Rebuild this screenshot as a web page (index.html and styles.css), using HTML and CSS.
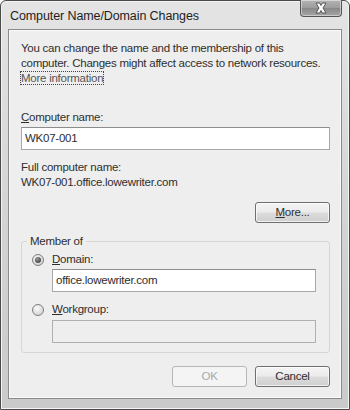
FILE: index.html
```html
<!DOCTYPE html>
<html>
<head>
  <meta charset="utf-8" />
  <title>Computer Name/Domain Changes</title>
  <link rel="stylesheet" href="styles.css">
</head>
<body>
  <div class="window">
    <!-- Titelleiste -->
    <div class="titlebar">
      <span class="title">Computer Name/Domain Changes</span>
      <div class="close-btn">
        <svg width="16" height="12" viewBox="0 0 16 12">
          <path d="M3 1 L6.5 1 L8 3.5 L9.5 1 L13 1 L10 6 L13 11 L9.5 11 L8 8.5 L6.5 11 L3 11 L6 6 Z" fill="#fff" stroke="#555" stroke-width="1" stroke-linejoin="round"/>
        </svg>
      </div>
    </div>

    <div class="client">
      <p class="intro">You can change the name and the membership of this computer. Changes might affect access to network resources.</p>
      <span class="link">More information</span>

      <label class="field-label"><u>C</u>omputer name:</label>
      <div class="textbox">WK07-001</div>

      <div class="full-label">Full computer name:</div>
      <div class="full-value">WK07-001.office.lowewriter.com</div>

      <div class="more-row">
        <div class="button"><u>M</u>ore...</div>
      </div>

      <!-- Gruppe "Member of" -->
      <div class="groupbox">
        <span class="legend">Member of</span>
        <div class="radio-row">
          <span class="radio checked"></span>
          <span><u>D</u>omain:</span>
        </div>
        <div class="textbox indent">office.lowewriter.com</div>
        <div class="radio-row second">
          <span class="radio"></span>
          <span><u>W</u>orkgroup:</span>
        </div>
        <div class="textbox indent disabled"></div>
      </div>

      <div class="actions">
        <div class="button disabled">OK</div>
        <div class="button">Cancel</div>
      </div>
    </div>
  </div>
</body>
</html>
```

FILE: styles.css
```css
/* Grundlayout */
html, body {
  margin: 0;
  padding: 0;
  background: #fff;
  font-family: "Liberation Sans", Arial, sans-serif;
  font-size: 11.5px;
  letter-spacing: -0.25px;
  color: #2e2e2e;
}

/* Fensterrahmen */
.window {
  width: 350px;
  height: 410px;
  box-sizing: border-box;
  display: flex;
  flex-direction: column;
  border: 1px solid #4a4a4a;
  border-radius: 6px 6px 0 0;
  background: linear-gradient(to bottom, #e4e4e4 0%, #d2d2d2 60%, #cacaca 100%);
  box-shadow: inset 0 0 0 1px #f4f4f4;
  padding: 0 7px 10px 7px;
}

.titlebar {
  height: 28px;
  flex: none;
  display: flex;
  align-items: flex-start;
}

.title {
  padding: 8px 0 0 2px;
  font-size: 12.5px;
  line-height: 15px;
  letter-spacing: -0.1px;
  color: #1e1e1e;
}

.close-btn {
  margin-left: auto;
  width: 42px;
  height: 17px;
  box-sizing: border-box;
  margin-top: -1px;
  border: 1px solid #555;
  border-top: none;
  border-radius: 0 0 4px 4px;
  background: linear-gradient(to bottom, #b4b4b4 0%, #9c9c9c 50%, #888 51%, #a4a4a4 100%);
  box-shadow: inset 0 0 0 1px rgba(255, 255, 255, 0.45);
  display: flex;
  align-items: center;
  justify-content: center;
}

/* Innenbereich */
.client {
  flex: 1;
  border: 1px solid #8a8a8a;
  box-shadow: inset 0 0 0 1px #fafafa;
  background: #eeeeee;
  padding: 11px 11px 0 12px;
  display: flex;
  flex-direction: column;
  align-items: flex-start;
}

.intro {
  margin: 0;
  line-height: 15px;
}

.link {
  line-height: 12px;
  color: #555;
  border: 1px dotted #444;
  margin-left: -1px;
}

.field-label {
  margin-top: 25px;
  line-height: 15px;
}

.textbox {
  box-sizing: border-box;
  width: 100%;
  height: 23px;
  margin-top: 2px;
  border: 1px solid #a8a8a8;
  border-top-color: #8c8c8c;
  background: #fff;
  padding: 3px 3px 0 3px;
  line-height: 15px;
}

.full-label {
  margin-top: 10px;
  line-height: 15px;
}

.full-value {
  line-height: 15px;
}

.more-row {
  align-self: stretch;
  display: flex;
  justify-content: flex-end;
  margin-top: 12px;
}

.button {
  width: 75px;
  height: 21px;
  box-sizing: border-box;
  border: 1px solid #6f6f6f;
  border-radius: 3px;
  background: linear-gradient(to bottom, #f4f4f4 0%, #ebebeb 48%, #dcdcdc 52%, #cfcfcf 100%);
  box-shadow: inset 0 0 0 1px rgba(255, 255, 255, 0.7);
  text-align: center;
  line-height: 19px;
}

.button.disabled {
  border-color: #b6b6b6;
  background: #f4f4f4;
  color: #a8a8a8;
  box-shadow: none;
}

/* Gruppe */
.groupbox {
  position: relative;
  align-self: stretch;
  margin-top: 18px;
  border: 1px solid #d6d6d6;
  border-radius: 3px;
  padding: 10px 13px 9px 10px;
  display: flex;
  flex-direction: column;
  align-items: flex-start;
}

.legend {
  position: absolute;
  top: -8px;
  left: 5px;
  padding: 0 3px;
  background: #eeeeee;
  line-height: 15px;
}

.radio-row {
  display: flex;
  align-items: center;
  gap: 8px;
  line-height: 15px;
}

.radio-row.second {
  margin-top: 10px;
}

.radio {
  width: 10px;
  height: 10px;
  border-radius: 50%;
  border: 1px solid #7e7e7e;
  background: radial-gradient(circle at 40% 35%, #fafafa 0%, #d8d8d8 70%, #c4c4c4 100%);
  position: relative;
}

.radio.checked::after {
  content: "";
  position: absolute;
  left: 2px;
  top: 2px;
  width: 6px;
  height: 6px;
  border-radius: 50%;
  background: radial-gradient(circle at 40% 35%, #9a9a9a 0%, #3c3c3c 80%);
}

.textbox.indent {
  margin-left: 20px;
  width: calc(100% - 20px);
}

.radio-row.second + .textbox {
  margin-top: 3px;
}

.textbox.disabled {
  background: #eeeeee;
  border-color: #b0b0b0;
}

.actions {
  align-self: stretch;
  display: flex;
  justify-content: flex-end;
  gap: 8px;
  margin-top: 13px;
}
```
